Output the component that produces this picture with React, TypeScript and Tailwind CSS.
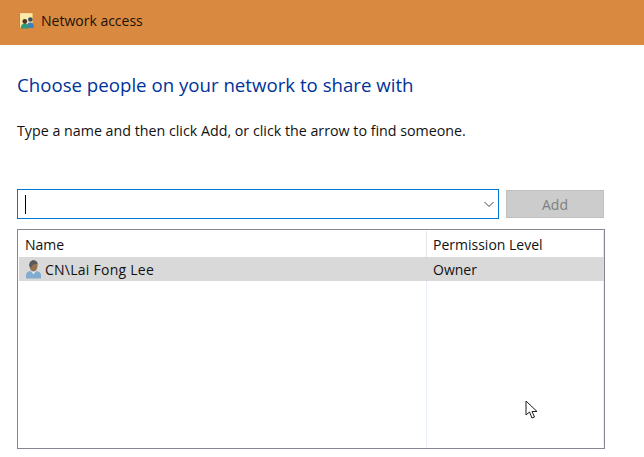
const FolderPeople = () => (
  <svg width="16" height="16" viewBox="0 0 16 16" className="shrink-0">
    <rect x="0.5" y="0" width="13" height="14.500" fill="#fde9a8" stroke="#e8c76e" strokeWidth="0.600" />
    <rect x="0" y="0" width="1" height="15" fill="#b98f2e" />
    <circle cx="11.300" cy="6.500" r="2.300" fill="#3b4f63" />
    <path d="M8 15v-2.500c0-2 1.300-3 3.300-3s3.300 1 3.300 3V15z" fill="#3f7fc0" />
    <circle cx="5.800" cy="8.500" r="2.400" fill="#4a3527" />
    <path d="M2 15.500v-2c0-2 1.600-2.800 3.800-2.800s3.800.8 3.800 2.800v2z" fill="#2f9a78" />
  </svg>
);

const UserIcon = () => (
  <svg width="17" height="19" viewBox="0 0 17 19" className="shrink-0">
    <path d="M1 18.500v-3.500c0-2.500 2.500-3.500 4.500-4l3 2.500 3-2.500c2 .5 4.500 1.500 4.500 4v3.500z" fill="#83abd0" />
    <path d="M6 11l2.500 3.500 2.500-3.500z" fill="#dce8f3" />
    <path d="M4.500 5.500c0-3.200 1.700-5 4-5s4 1.800 4 5c0 3-1.700 6-4 6s-4-3-4-6z" fill="#96714f" />
    <path d="M4.300 6c-.3-3.500 1.700-5.800 4.200-5.800S12.800 2 12.700 4.500C10.500 3.500 7 4 5.800 8z" fill="#565a5e" />
  </svg>
);

const Cursor = () => (
  <svg width="14" height="20" viewBox="0 0 14 20" className="absolute left-[525px] top-[400px]">
    <path d="M1 1v14l3.500-3 2.500 6 2.500-1-2.500-5.500H12z" fill="#fff" stroke="#1c1c1c" strokeWidth="1" strokeLinejoin="miter" />
  </svg>
);

export default function App() {
  return (
    <div className="relative w-[644px] h-[457px] overflow-hidden bg-white font-['Open_Sans','Noto_Sans',sans-serif] text-[14px] text-[#111]">
      <div className="h-[45px] bg-[#d98a40] flex items-center pl-[19px] gap-[6px] pb-[3px]">
        <FolderPeople />
        <span className="text-[14px] leading-5 text-[#1a120a]">Network access</span>
      </div>

      <div className="pl-[17px] pr-[39px]">
        <h1 className="mt-[26px] text-[18.67px] leading-[28px] text-[#003399]">Choose people on your network to share with</h1>
        <p className="mt-[22px] text-[14.25px] leading-5">Type a name and then click Add, or click the arrow to find someone.</p>

        <div className="mt-[48px] flex items-center gap-[7px]">
          <div className="w-[482px] h-[30px] border border-[#0078d7] flex items-center justify-between pl-[7px] pr-[3px]">
            <div className="w-px h-[19px] bg-black" />
            <svg width="12" height="8" viewBox="0 0 12 8" fill="none" stroke="#444" strokeWidth="1">
              <path d="M1.500 2l4.500 4.500L10.500 2" />
            </svg>
          </div>
          <div className="w-[98px] h-[28px] bg-[#cccccc] border border-[#bfbfbf] flex items-center justify-center text-[#7f7f7f]">Add</div>
        </div>

        <div className="mt-[10px] w-[588px] h-[220px] border border-[#828790] pt-px pl-px pr-px">
          <div className="flex h-[26px] items-center w-[585px]">
            <div className="w-[407px] pl-[6px] h-full flex items-center">Name</div>
            <div className="flex-1 pl-[6px] h-full flex items-center border-l border-r border-[#e5e5e5]">Permission Level</div>
          </div>
          <div className="flex h-[24px] items-center bg-[#d9d9d9] w-[585px]">
            <div className="w-[408px] pl-[6px] flex items-center">
              <UserIcon />
              <span className="ml-[3px] tracking-[0.25px]">CN\Lai Fong Lee</span>
            </div>
            <div className="pl-[6px]">Owner</div>
          </div>
          <div className="flex h-[166px] w-[585px]">
            <div className="w-[407px]" />
            <div className="flex-1 border-l border-r border-[#e8eefa]" />
          </div>
        </div>
      </div>
      <Cursor />
    </div>
  );
}
